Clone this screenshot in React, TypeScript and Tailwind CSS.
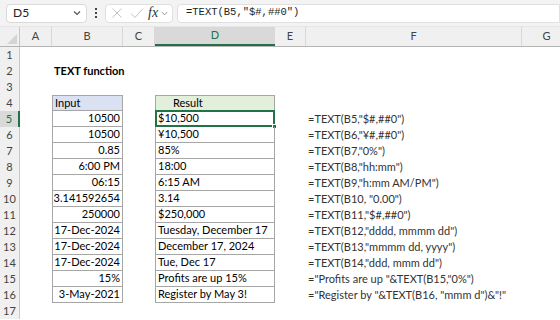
import React from 'react';

const cols = [
  { key: '', w: 20 },
  { key: 'A', w: 32 },
  { key: 'B', w: 71 },
  { key: 'C', w: 32 },
  { key: 'D', w: 120 },
  { key: 'E', w: 31 },
  { key: 'F', w: 216 },
  { key: 'G', w: 50 },
];

const rows: { input: string; result: string; formula: string }[] = [
  { input: '10500', result: '$10,500', formula: '=TEXT(B5,"$#,##0")' },
  { input: '10500', result: '¥10,500', formula: '=TEXT(B6,"¥#,##0")' },
  { input: '0.85', result: '85%', formula: '=TEXT(B7,"0%")' },
  { input: '6:00 PM', result: '18:00', formula: '=TEXT(B8,"hh:mm")' },
  { input: '06:15', result: '6:15 AM', formula: '=TEXT(B9,"h:mm AM/PM")' },
  { input: '3.141592654', result: '3.14', formula: '=TEXT(B10, "0.00")' },
  { input: '250000', result: '$250,000', formula: '=TEXT(B11,"$#,##0")' },
  { input: '17-Dec-2024', result: 'Tuesday, December 17', formula: '=TEXT(B12,"dddd, mmmm dd")' },
  { input: '17-Dec-2024', result: 'December 17, 2024', formula: '=TEXT(B13,"mmmm dd, yyyy")' },
  { input: '17-Dec-2024', result: 'Tue, Dec 17', formula: '=TEXT(B14,"ddd, mmm dd")' },
  { input: '15%', result: 'Profits are up 15%', formula: '="Profits are up "&TEXT(B15,"0%")' },
  { input: '3-May-2021', result: 'Register by May 3!', formula: '="Register by "&TEXT(B16, "mmm d")&"!"' },
];

const gridCols = 'grid grid-cols-[20px_32px_71px_32px_120px_31px_216px_50px]';

function RowHead({ n, active }: { n: number; active?: boolean }) {
  return (
    <div
      className={
        active
          ? 'h-4 flex items-center justify-center bg-[#d9d9d9] border-r-2 border-[#217346] text-[#217346] text-[11px]'
          : 'h-4 flex items-center justify-center bg-[#f0f0f0] border-r border-[#c8c8c8] text-[#444] text-[11px]'
      }
    >
      {n}
    </div>
  );
}

export default function App() {
  return (
    <div className="w-[560px] h-[320px] overflow-hidden bg-white font-['Lato',sans-serif] text-[11px] text-black whitespace-nowrap">
      {/* formula bar */}
      <div className="h-[27px] bg-[#f3f3f3] flex items-center pl-[6px] border-b border-[#e6e6e6]">
        <div className="w-[81px] h-[19px] bg-white border border-[#dadada] rounded-[4px] flex items-center justify-between pl-[6px] pr-[4px]">
          <span className="text-[12px] text-[#222]">D5</span>
          <svg width="10" height="10" viewBox="0 0 10 10">
            <path d="M2 3.5 L5 6.5 L8 3.5" fill="none" stroke="#555" strokeWidth="1.2" />
          </svg>
        </div>
        <div className="w-[18px] flex flex-col items-center gap-[2px]">
          <div className="w-[2px] h-[2px] bg-[#444]" />
          <div className="w-[2px] h-[2px] bg-[#444]" />
          <div className="w-[2px] h-[2px] bg-[#444]" />
        </div>
        <div className="w-[68px] h-[19px] bg-white border border-[#e0e0e0] rounded-[4px] flex items-center pl-[3px]">
          <svg width="14" height="14" viewBox="0 0 14 14" className="ml-[1px]">
            <path d="M2.5 2.5 L11.5 11.5 M11.5 2.5 L2.5 11.5" stroke="#c4c4c4" strokeWidth="1" />
          </svg>
          <svg width="16" height="14" viewBox="0 0 16 14" className="ml-[5px]">
            <path d="M2 7.5 L6 11.5 L14 2.5" fill="none" stroke="#c4c4c4" strokeWidth="1" />
          </svg>
          <span className="ml-[3px] font-['Liberation_Serif',serif] italic text-[14px] text-[#333] leading-none">
            fx
          </span>
          <svg width="9" height="9" viewBox="0 0 10 10" className="ml-[2px]">
            <path d="M2 3.5 L5 6.5 L8 3.5" fill="none" stroke="#888" strokeWidth="1" />
          </svg>
        </div>
        <div className="ml-[4px] flex-1 h-[19px] bg-white border border-[#e0e0e0] rounded-l-[4px] flex items-center pl-[8px]">
          <span className="font-['Liberation_Mono',monospace] text-[10.5px] text-[#222]">=TEXT(B5,"$#,##0")</span>
        </div>
      </div>

      {/* column headers */}
      <div className={gridCols + ' h-[20px] bg-[#f0f0f0] border-b border-[#b4b4b4]'}>
        {cols.map((c, i) =>
          i === 0 ? (
            <div key="corner" className="relative border-r border-[#c8c8c8]">
              <svg width="10" height="10" viewBox="0 0 10 10" className="absolute right-[2px] bottom-[2px]">
                <path d="M10 0 L10 10 L0 10 Z" fill="#d4d4d4" />
              </svg>
            </div>
          ) : c.key === 'D' ? (
            <div key={c.key} className="flex items-center justify-center bg-[#d9d9d9] border-b-2 border-[#217346] text-[#217346] text-[11px]">
              {c.key}
            </div>
          ) : (
            <div key={c.key} className="flex items-center justify-center border-r border-[#d8d8d8] text-[#444] text-[11px]">
              {c.key}
            </div>
          )
        )}
      </div>

      {/* rows 1-3 */}
      <div className={gridCols}>
        <RowHead n={1} />
        <div className="col-span-7" />
        <RowHead n={2} />
        <div />
        <div className="col-span-6 h-4 flex items-center pl-[2px] font-bold">TEXT function</div>
        <RowHead n={3} />
        <div className="col-span-7" />

        {/* row 4 headers */}
        <RowHead n={4} />
        <div />
        <div className="h-4 flex items-center pl-[2px] bg-[#d9e1f2] border border-[#a6a6a6]">Input</div>
        <div />
        <div className="h-4 flex items-center pl-[17px] bg-[#e2efda] border border-[#a6a6a6]">Result</div>
        <div className="col-span-3" />

        {rows.map((r, i) => {
          const n = i + 5;
          return (
            <React.Fragment key={n}>
              <RowHead n={n} active={n === 5} />
              <div />
              <div className="h-4 flex items-center justify-end pr-[2px] border-x border-b border-[#a6a6a6]">{r.input}</div>
              <div />
              <div className="relative h-4 flex items-center pl-[2px] border-x border-b border-[#a6a6a6]">
                {r.result}
                {n === 5 && (
                  <div className="absolute -left-[1px] -top-[1px] -right-[1px] -bottom-[1px] border-2 border-[#217346]">
                    <div className="absolute -right-[4px] -bottom-[4px] w-[5px] h-[5px] bg-[#217346] border border-white" />
                  </div>
                )}
              </div>
              <div />
              <div className="col-span-2 h-4 flex items-center pl-[2px] text-[#333] whitespace-pre">{r.formula}</div>
            </React.Fragment>
          );
        })}
        <RowHead n={17} />
        <div className="col-span-7" />
      </div>
    </div>
  );
}
